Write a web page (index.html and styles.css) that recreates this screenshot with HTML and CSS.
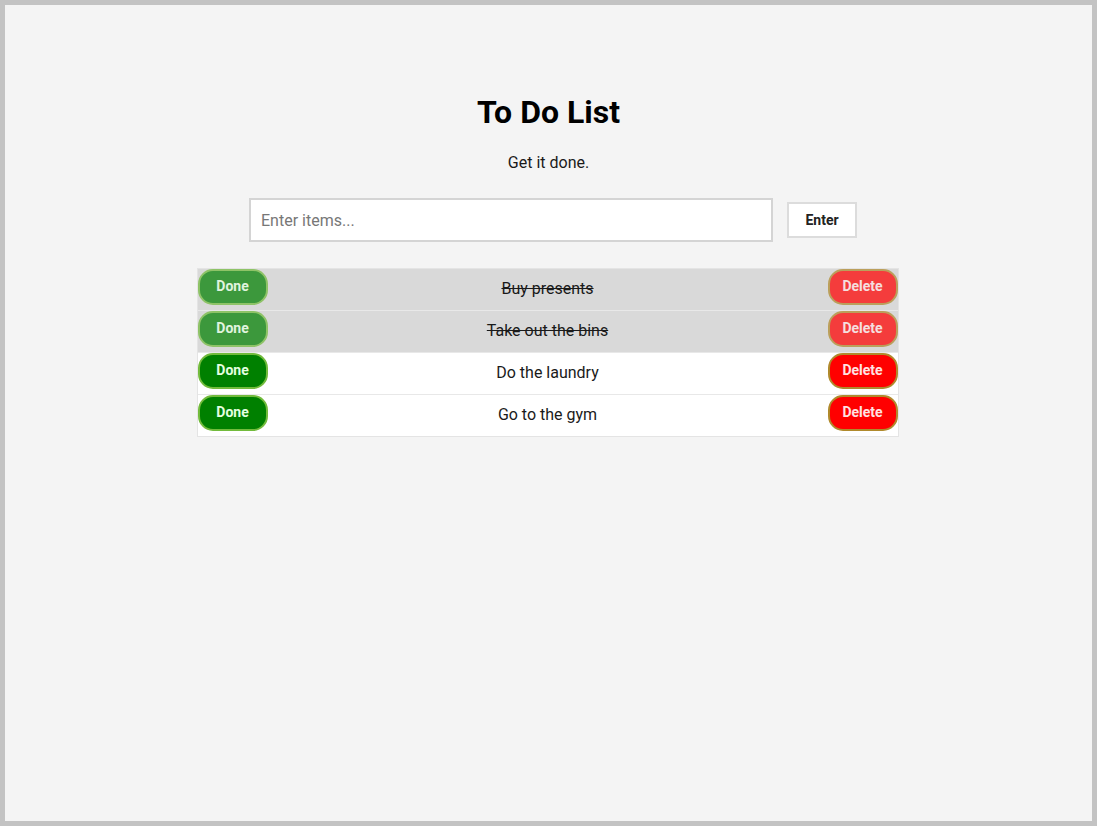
FILE: index.html
```html
<!DOCTYPE html>
<html lang="en">
<head>
<meta charset="utf-8">
<title>To Do List</title>
<link rel="stylesheet" href="styles.css">
</head>
<body>
<main class="app">
  <h1 class="title">To Do List</h1>
  <p class="subtitle">Get it done.</p>
  <form class="entry">
    <input class="entry-input" type="text" placeholder="Enter items...">
    <button class="entry-btn" type="button">Enter</button>
  </form>
  <ul class="list">
    <li class="item is-done">
      <button class="btn btn-done" type="button">Done</button>
      <span class="item-text">Buy presents</span>
      <button class="btn btn-delete" type="button">Delete</button>
    </li>
    <li class="item is-done">
      <button class="btn btn-done" type="button">Done</button>
      <span class="item-text">Take out the bins</span>
      <button class="btn btn-delete" type="button">Delete</button>
    </li>
    <li class="item">
      <button class="btn btn-done" type="button">Done</button>
      <span class="item-text">Do the laundry</span>
      <button class="btn btn-delete" type="button">Delete</button>
    </li>
    <li class="item">
      <button class="btn btn-done" type="button">Done</button>
      <span class="item-text">Go to the gym</span>
      <button class="btn btn-delete" type="button">Delete</button>
    </li>
  </ul>
</main>
</body>
</html>
```
FILE: styles.css
```css
* { box-sizing: border-box; }

html, body { margin: 0; padding: 0; }

body {
  width: 1097px;
  height: 826px;
  border: 5px solid #c3c3c3;
  background: #f4f4f4;
  font-family: Roboto, "Liberation Sans", Arial, sans-serif;
  color: #1a1a1a;
  overflow: hidden;
}

.app {
  display: flex;
  flex-direction: column;
  align-items: center;
  padding-top: 88px;
}

.title {
  margin: 0;
  font-size: 32px;
  line-height: 38px;
  font-weight: 700;
  color: #000;
}

.subtitle {
  margin: 22px 0 0;
  font-size: 16px;
  line-height: 20px;
  color: #1a1a1a;
}

.entry {
  display: flex;
  align-items: center;
  gap: 14px;
  margin-top: 25px;
  padding-left: 9px;
}

.entry-input {
  width: 524px;
  height: 44px;
  border: 2px solid #d4d4d4;
  background: #fff;
  padding: 0 10px;
  font-family: Roboto, "Liberation Sans", sans-serif;
  font-size: 16px;
  color: #222;
  outline: none;
}

.entry-input::placeholder { color: #777; }

.entry-btn {
  width: 70px;
  height: 36px;
  border: 2px solid #dcdcdc;
  background: #fff;
  font-family: Roboto, "Liberation Sans", sans-serif;
  font-size: 14px;
  font-weight: 700;
  color: #222;
  padding: 0;
}

.list {
  list-style: none;
  margin: 26px 2px 0 0;
  padding: 0;
  width: 702px;
  border: 1px solid #e4e4e4;
  background: #fff;
}

.item {
  display: flex;
  align-items: flex-start;
  height: 42px;
  border-bottom: 1px solid #e8e8e8;
  background: #fff;
}

.item:last-child { border-bottom: none; height: 41px; }

.item.is-done { background: #d9d9d9; }

.item-text {
  flex: 1;
  align-self: center;
  text-align: center;
  font-size: 16px;
  line-height: 20px;
  margin-bottom: 2px;
  color: #1a1a1a;
}

.is-done .item-text { text-decoration: line-through; }

.btn {
  width: 70px;
  height: 36px;
  border-radius: 15px;
  border: 2px solid;
  padding: 0 0 2px;
  font-family: Roboto, "Liberation Sans", Arial, sans-serif;
  font-size: 14px;
  font-weight: 700;
}

.btn-done {
  background: #008000;
  border-color: #72bb3c;
  color: #e4ffe0;
}

.btn-delete {
  background: #ff0000;
  border-color: #b08a2c;
  color: #ffe2e2;
}

.is-done .btn { opacity: 0.72; }
```
